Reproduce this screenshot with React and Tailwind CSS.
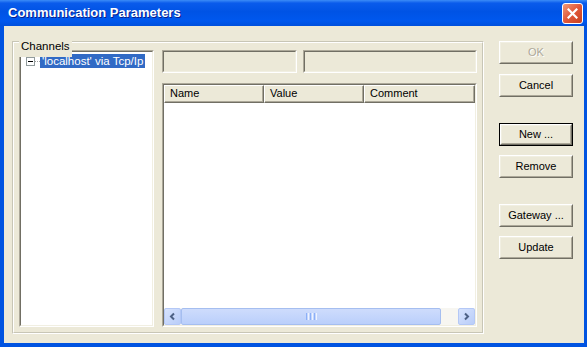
import React from "react";

const font = { fontFamily: '"Liberation Sans", Arial, sans-serif' };

function Btn({ label, className = "", isDefault = false, disabled = false }) {
  const inner = (
    <div className="h-full w-full border border-t-white border-l-white border-r-[#716F64] border-b-[#716F64]">
      <div className="h-full w-full border border-t-[#F1EFE2] border-l-[#F1EFE2] border-r-[#ACA899] border-b-[#ACA899] bg-[#ECE9D8] flex items-center justify-center">
        <span
          className={
            disabled
              ? "text-[11px] text-[#ACA899] [text-shadow:1px_1px_0_#ffffff]"
              : "text-[11px] text-black"
          }
        >
          {label}
        </span>
      </div>
    </div>
  );
  return (
    <div className={"w-[74px] h-[23px] " + (isDefault ? "border border-black " : "") + className}>
      {inner}
    </div>
  );
}

function Sunken({ className = "", innerClass = "", children }) {
  return (
    <div className={"border border-t-[#ACA899] border-l-[#ACA899] border-r-white border-b-white " + className}>
      <div className={"h-full w-full border border-t-[#716F64] border-l-[#716F64] border-r-[#F1EFE2] border-b-[#F1EFE2] " + innerClass}>
        {children}
      </div>
    </div>
  );
}

function HeaderCell({ label, className = "" }) {
  return (
    <div className={"h-full border border-t-white border-l-white border-r-[#716F64] border-b-[#716F64] " + className}>
      <div className="h-full w-full border-r border-b border-r-[#ACA899] border-b-[#ACA899] bg-[#ECE9D8] flex items-center pl-[5px]">
        <span className="text-[11px] text-black">{label}</span>
      </div>
    </div>
  );
}

function ArrowBtn({ dir }) {
  return (
    <div className="w-[17px] h-[17px] rounded-[2px] border border-[#B4C8F6] bg-[linear-gradient(to_bottom_right,#D7E3FD,#B9CDF9)] flex items-center justify-center">
      <svg width="9" height="9" viewBox="0 0 9 9">
        {dir === "left" ? (
          <path d="M6 1.5 L3 4.5 L6 7.5" fill="none" stroke="#4D6185" strokeWidth="2" />
        ) : (
          <path d="M3 1.5 L6 4.5 L3 7.5" fill="none" stroke="#4D6185" strokeWidth="2" />
        )}
      </svg>
    </div>
  );
}

export default function App() {
  return (
    <div className="w-[587px] h-[347px] flex flex-col bg-[#0053E1] overflow-hidden" style={font}>
      {/* Title bar */}
      <div className="h-[26px] shrink-0 flex items-start justify-between pl-[8px] pr-[4px] bg-[linear-gradient(to_bottom,#3C8CF7_0%,#0A5BEB_12%,#0053E5_45%,#0058EE_80%,#0050DD_100%)]">
        <div className="h-[25px] flex items-center">
          <span className="text-[13px] font-bold text-white [text-shadow:1px_1px_0_#0A1E8C]">
            Communication Parameters
          </span>
        </div>
        <div className="mt-[3px] w-[21px] h-[21px] rounded-[3px] border border-white bg-[linear-gradient(to_bottom_right,#F29A78,#E0583A_50%,#C8401E)] flex items-center justify-center">
          <svg width="11" height="11" viewBox="0 0 11 11">
            <path d="M1.5 1.5 L9.5 9.5 M9.5 1.5 L1.5 9.5" stroke="white" strokeWidth="2.2" strokeLinecap="square" />
          </svg>
        </div>
      </div>

      {/* Body */}
      <div className="flex-1 ml-[4px] mr-[3px] mb-[4px] bg-[#ECE9D8] flex pl-[8px] pt-[15px]">
        {/* Group box */}
        <div className="relative w-[472px] h-[293px] border border-t-[#C8C6B6] border-l-[#C8C6B6] border-r-white border-b-white">
          <div className="h-full w-full border border-t-white border-l-white border-r-[#C8C6B6] border-b-[#C8C6B6] flex pl-[5px] pt-[7px] pr-[5px] pb-[5px] gap-[8px]">
            {/* Tree */}
            <Sunken className="w-[135px] h-full shrink-0" innerClass="bg-white">
              <div className="pl-[5px] pt-[2px] flex items-center h-[16px]">
                <div className="w-[9px] h-[9px] border border-[#919B9C] bg-white flex items-center justify-center">
                  <div className="w-[5px] h-[1px] bg-black" />
                </div>
                <div className="w-[5px] h-0 border-t border-dotted border-[#A0A0A0]" />
                <span className="h-[14px] leading-[14px] px-[2px] bg-[#316AC5] text-white text-[11.5px] whitespace-nowrap">
                  'localhost' via Tcp/Ip
                </span>
              </div>
            </Sunken>

            {/* Right column */}
            <div className="flex-1 flex flex-col gap-[10px]">
              <div className="flex gap-[6px] h-[23px]">
                <Sunken className="w-[135px] h-full" innerClass="bg-[#ECE9D8]" />
                <Sunken className="flex-1 h-full" innerClass="bg-[#ECE9D8]" />
              </div>
              <Sunken className="flex-1" innerClass="bg-white flex flex-col">
                <div className="h-[18px] flex shrink-0">
                  <HeaderCell label="Name" className="w-[100px]" />
                  <HeaderCell label="Value" className="w-[100px]" />
                  <HeaderCell label="Comment" className="flex-1" />
                </div>
                <div className="flex-1" />
                <div className="h-[17px] flex bg-[#F7F6F1] shrink-0">
                  <ArrowBtn dir="left" />
                  <div className="w-[260px] h-[17px] rounded-[2px] border border-[#A5BEF0] bg-[linear-gradient(to_bottom,#CEDCFC,#BACFFB)] flex items-center justify-center">
                    <div className="flex gap-[1px]">
                      <div className="w-[1px] h-[7px] bg-[#8CB0F8]" />
                      <div className="w-[1px] h-[7px] bg-[#EEF3FF]" />
                      <div className="w-[1px] h-[7px] bg-[#8CB0F8]" />
                      <div className="w-[1px] h-[7px] bg-[#EEF3FF]" />
                      <div className="w-[1px] h-[7px] bg-[#8CB0F8]" />
                      <div className="w-[1px] h-[7px] bg-[#EEF3FF]" />
                    </div>
                  </div>
                  <div className="flex-1" />
                  <ArrowBtn dir="right" />
                </div>
              </Sunken>
            </div>
          </div>
          <div className="absolute left-[6px] top-[-9px] px-[2px] bg-[#ECE9D8]">
            <span className="text-[11.5px] text-black leading-[14px]">Channels</span>
          </div>
        </div>

        {/* Buttons */}
        <div className="ml-[15px] flex flex-col">
          <Btn label="OK" disabled />
          <Btn label="Cancel" className="mt-[10px]" />
          <Btn label="New ..." isDefault className="mt-[26px]" />
          <Btn label="Remove" className="mt-[9px]" />
          <Btn label="Gateway ..." className="mt-[26px]" />
          <Btn label="Update" className="mt-[9px]" />
        </div>
      </div>
    </div>
  );
}
